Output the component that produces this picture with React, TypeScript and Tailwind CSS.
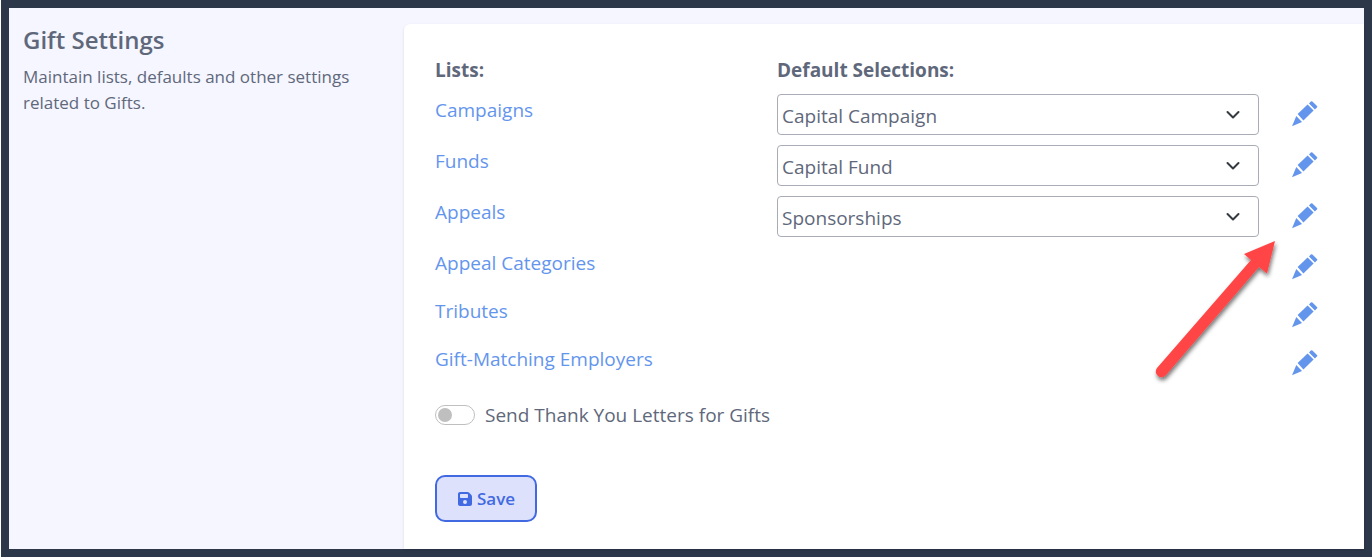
import React from 'react';
import { FaFloppyDisk } from 'react-icons/fa6';

const lists = [
  { name: 'Campaigns', selection: 'Capital Campaign' },
  { name: 'Funds', selection: 'Capital Fund' },
  { name: 'Appeals', selection: 'Sponsorships' },
  { name: 'Appeal Categories' },
  { name: 'Tributes' },
  { name: 'Gift-Matching Employers' },
];

function PencilIcon() {
  return (
    <svg viewBox="0 0 26 26" className="h-[26px] w-[26px]" fill="currentColor" aria-hidden="true">
      <path d="M0 25.2 4.3 15 10 20.9Z" />
      <path d="M5.6 13.1 15.6 3.4 21.6 9.5 11.4 19.5Z" />
      <path d="M17 2.4 18.8.5Q19.6-.2 20.4.6L25 5Q25.6 5.8 24.9 6.5L22.9 8.4Z" />
    </svg>
  );
}

function ChevronIcon() {
  return (
    <svg
      viewBox="0 0 16 16"
      className="pointer-events-none absolute right-[18px] top-3 h-4 w-4"
      fill="none"
      stroke="#343a40"
      strokeWidth="2"
      strokeLinecap="round"
      strokeLinejoin="round"
      aria-hidden="true"
    >
      <path d="m2.500 6 5.500 5.500 5.500-5.500" />
    </svg>
  );
}

function Arrow() {
  return (
    <svg
      viewBox="0 0 136 156"
      className="pointer-events-none absolute right-[78px] top-[206px] h-[156px] w-[136px]"
      aria-hidden="true"
    >
      <defs>
        <filter id="arrow-shadow" x="-20%" y="-20%" width="140%" height="140%">
          <feDropShadow dx="1" dy="3" stdDeviation="2" floodColor="#000" floodOpacity="0.55" />
        </filter>
      </defs>
      <path
        d="M125 11 117 43.500 109 37 16 145A5 5 0 0 1 7 138L101 30 94 24Z"
        fill="#ff4444"
        filter="url(#arrow-shadow)"
      />
    </svg>
  );
}

export default function App() {
  return (
    <div className="flex min-h-screen flex-col bg-white pl-px font-['Open_Sans',sans-serif] text-[#5f687b]">
      <div className="flex flex-1 border-8 border-[#2c374a] bg-[#f5f6ff]">
        <aside className="w-[395px] shrink-0 pl-[14px] pr-4 pt-4">
          <h1 className="text-2xl font-semibold">Gift Settings</h1>
          <p className="mt-2 text-[17px] leading-[26px]">
            Maintain lists, defaults and other settings related to Gifts.
          </p>
        </aside>

        <main className="relative mt-4 flex-1 rounded-tl-md bg-white pl-[31px] pr-[14px] pt-8 text-[19px] shadow-sm">
          <div className="mb-[10px] grid grid-cols-[342px_1fr] font-bold leading-7">
            <h2>Lists:</h2>
            <h2>Default Selections:</h2>
          </div>

          {lists.map((list) => (
            <div
              key={list.name}
              className={`grid grid-cols-[342px_1fr_91px] items-start ${
                list.selection ? 'mb-[10px]' : 'mb-[15px]'
              }`}
            >
              <a href="#" className="leading-8 text-[#6495ed]">
                {list.name}
              </a>
              {list.selection ? (
                <div className="relative">
                  <select
                    aria-label={`Default ${list.name}`}
                    className="block h-[41px] w-full appearance-none rounded border border-[#a9abb5] bg-white px-1 pt-1"
                  >
                    <option>{list.selection}</option>
                  </select>
                  <ChevronIcon />
                </div>
              ) : (
                <span />
              )}
              <button
                type="button"
                aria-label={`Edit ${list.name}`}
                className="mt-[7px] justify-self-center text-[#6495ed]"
              >
                <PencilIcon />
              </button>
            </div>
          ))}

          <label className="mt-[25px] flex items-center gap-[10px] leading-7">
            <input
              type="checkbox"
              role="switch"
              className="h-5 w-10 appearance-none rounded-full border border-[#bfbfbf] bg-white before:ml-[2px] before:mt-[2px] before:block before:h-[14px] before:w-[14px] before:rounded-full before:bg-[#bfbfbf] checked:before:ml-[22px]"
            />
            Send Thank You Letters for Gifts
          </label>

          <button
            type="button"
            className="mt-[46px] flex h-[47px] items-center gap-1 rounded-[10px] border-2 border-[#4169e1] bg-[#dee1fc] px-5 text-[17px] font-semibold text-[#4169e1]"
          >
            <FaFloppyDisk className="h-4 w-4" />
            Save
          </button>

          <Arrow />
        </main>
      </div>
    </div>
  );
}
